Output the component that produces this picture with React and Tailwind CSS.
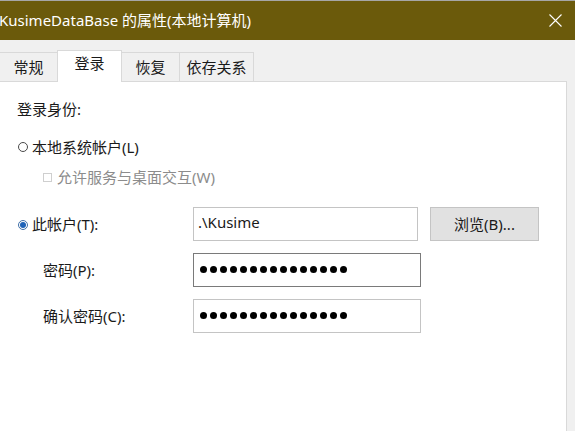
import React from "react";

const font = { fontFamily: '"Noto Sans", "Noto Sans CJK SC", sans-serif' };

/* ================= PIECES ================= */
function Tab({ active, children, width }) {
  return active ? (
    <div
      className={`relative z-10 -ml-px -mb-px h-[32px] ${width} flex items-start justify-center pt-[1px] bg-white border border-b-0 border-[#d9d9d9]`}
    >
      {children}
    </div>
  ) : (
    <div
      className={`-ml-px h-[29px] ${width} flex items-center justify-center pt-[1px] bg-[#f0f0f0] border border-b-0 border-[#d9d9d9]`}
    >
      {children}
    </div>
  );
}

function Radio({ checked }) {
  return checked ? (
    <span className="w-[10px] h-[10px] rounded-full border border-[#3f6fa8] flex items-center justify-center">
      <span className="w-[6px] h-[6px] rounded-full bg-[#1f63b8]" />
    </span>
  ) : (
    <span className="w-[10px] h-[10px] rounded-full border border-[#4a4a4a]" />
  );
}

function Dots() {
  return (
    <div className="flex gap-[3px]">
      {Array.from({ length: 15 }).map((_, i) => (
        <span key={i} className="w-[7px] h-[7px] rounded-full bg-black" />
      ))}
    </div>
  );
}

/* ================= MAIN ================= */
export default function App() {
  return (
    <div
      style={font}
      className="w-[575px] h-[431px] overflow-hidden bg-[#f0f0f0] flex flex-col text-[15px] text-[#1a1a1a]"
    >
      {/* TITLE BAR */}
      <div className="h-[40px] shrink-0 border-t border-[#a6a6a6] bg-[#6b5a0b] flex items-center justify-between pb-[1px]">
        <span className="text-white text-[15px] -ml-[1px]">KusimeDataBase 的属性(本地计算机)</span>
        <svg width="13" height="13" viewBox="0 0 13 13" className="mr-[13px]">
          <path d="M0.5 0.5 L12.5 12.5 M12.5 0.5 L0.5 12.5" stroke="#fff" strokeWidth="1.1" />
        </svg>
      </div>

      {/* TABS */}
      <div className="flex items-end pt-[10px] shrink-0">
        <Tab width="w-[59px]">常规</Tab>
        <Tab active width="w-[65px]">登录</Tab>
        <Tab width="w-[59px]">恢复</Tab>
        <Tab width="w-[75px]">依存关系</Tab>
      </div>

      {/* PANEL */}
      <div className="flex-1 mr-[8px] bg-white border-t border-r border-[#d9d9d9] pl-[17px] pt-[17px]">
        <div className="h-[20px] flex items-center">登录身份:</div>

        <div className="mt-[18px] h-[20px] flex items-center gap-[4px] ml-[1px]">
          <Radio />
          <span>本地系统帐户(L)</span>
        </div>

        <div className="mt-[10px] h-[20px] flex items-center gap-[5px] ml-[26px] text-[#8c8c8c]">
          <span className="w-[9px] h-[9px] border border-[#cfcfcf]" />
          <span>允许服务与桌面交互(W)</span>
        </div>

        <div className="mt-[20px] h-[34px] flex items-center">
          <div className="w-[176px] flex items-center gap-[4px] pl-[1px] pt-[1px]">
            <Radio checked />
            <span>此帐户(T):</span>
          </div>
          <div className="w-[225px] h-[34px] border border-[#c4c4c4] px-[4px] flex items-start pt-[3px]">
            .\Kusime
          </div>
          <button className="ml-[12px] w-[109px] h-[34px] bg-[#e1e1e1] border border-[#c4c4c4] flex items-center justify-center">
            浏览(B)...
          </button>
        </div>

        <div className="mt-[12px] h-[34px] flex items-center">
          <div className="w-[176px] pl-[26px] pt-[1px]">密码(P):</div>
          <div className="w-[228px] h-[34px] border border-[#7a7a7a] px-[6px] flex items-center pb-[1px]">
            <Dots />
          </div>
        </div>

        <div className="mt-[12px] h-[34px] flex items-center">
          <div className="w-[176px] pl-[26px] pt-[1px]">确认密码(C):</div>
          <div className="w-[228px] h-[34px] border border-[#c4c4c4] px-[6px] flex items-center pb-[1px]">
            <Dots />
          </div>
        </div>
      </div>
    </div>
  );
}
